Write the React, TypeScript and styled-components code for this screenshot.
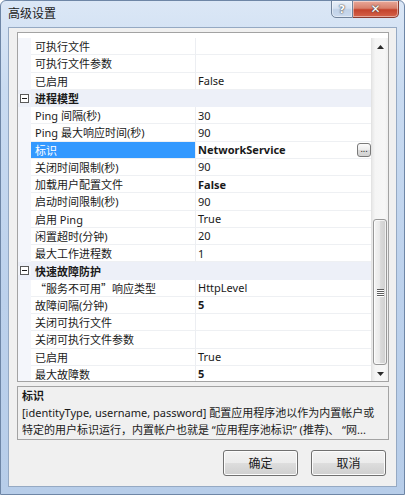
import React from "react";
import styled, { createGlobalStyle } from "styled-components";

const FONT = `"Noto Sans", "Noto Sans CJK SC", sans-serif`;

const GlobalStyle = createGlobalStyle`
  html, body { margin: 0; padding: 0; }
  body { width: 405px; height: 495px; overflow: hidden; background: #ffffff; }
  * { box-sizing: border-box; }
`;

const Window = styled.div`
  width: 405px;
  height: 495px;
  display: flex;
  flex-direction: column;
  border: 1px solid #6e86a6;
  border-radius: 6px 6px 0 0;
  background: linear-gradient(180deg, #dbe7f6 0%, #c9dbf1 18%, #bcd1ec 60%, #b7cde9 100%);
  font-family: ${FONT};
  color: #1a1a1a;
  overflow: hidden;
`;

const TitleBar = styled.div`
  height: 26px;
  flex: none;
  display: flex;
  align-items: flex-start;
  justify-content: space-between;
  padding-left: 7px;
`;

const Title = styled.span`
  font-size: 12px;
  line-height: 26px;
  color: #1c1c1c;
`;

const CaptionGroup = styled.div`
  display: flex;
  margin-right: 5px;
  margin-top: -1px;
`;

const CaptionButton = styled.div<{ $close?: boolean }>`
  width: ${(p) => (p.$close ? 46 : 22)}px;
  height: 18px;
  display: flex;
  align-items: center;
  justify-content: center;
  border: 1px solid ${(p) => (p.$close ? "#8a3b30" : "#71839b")};
  border-left-width: ${(p) => (p.$close ? 0 : 1)}px;
  border-radius: ${(p) => (p.$close ? "0 0 5px 0" : "0 0 0 5px")};
  background: ${(p) =>
    p.$close
      ? "linear-gradient(180deg, #e9a899 0%, #d8806c 45%, #c4432c 55%, #d5634a 100%)"
      : "linear-gradient(180deg, #e9f0f9 0%, #d7e3f2 45%, #c1d2e8 55%, #cbdaee 100%)"};
  box-shadow: inset 0 0 0 1px rgba(255, 255, 255, 0.45);
  color: #ffffff;
  font-family: "DejaVu Sans", sans-serif;
  font-weight: bold;
  font-size: ${(p) => (p.$close ? 12 : 11)}px;
  text-shadow: 0 0 2px #4b4b4b, 0 0 1px #333;
`;

const Client = styled.div`
  flex: 1;
  min-height: 0;
  margin: 0 7px 7px 7px;
  background: #f0f0f0;
  border: 1px solid #95a9c3;
  display: flex;
  flex-direction: column;
  padding: 4px 7px 10px 8px;
`;

const Grid = styled.div`
  flex: 1;
  min-height: 0;
  display: flex;
  border: 1px solid #a3a3a3;
  background: #ffffff;
  padding-top: 5px;
`;

const List = styled.div`
  flex: 1;
  min-width: 0;
  overflow: hidden;
  display: flex;
  flex-direction: column;
`;

const Row = styled.div`
  height: 17.26px;
  flex: none;
  display: flex;
  font-size: 11px;
`;

const Gutter = styled.div`
  width: 13px;
  flex: none;
  background: #f4f6fb;
  display: flex;
  align-items: center;
  justify-content: center;
`;

const NameCell = styled.div<{ $selected?: boolean }>`
  width: 165px;
  flex: none;
  display: flex;
  align-items: center;
  padding-left: 4px;
  white-space: nowrap;
  overflow: hidden;
  border-right: 1px solid #eceef2;
  border-bottom: 1px solid #eef0f3;
  background: ${(p) => (p.$selected ? "#3399ff" : "#ffffff")};
  color: ${(p) => (p.$selected ? "#ffffff" : "#1a1a1a")};
`;

const CjkQuote = styled.span`
  font-family: "Noto Sans CJK SC", sans-serif;
`;

const ValueCell = styled.div<{ $bold?: boolean }>`
  flex: 1;
  min-width: 0;
  display: flex;
  align-items: center;
  justify-content: space-between;
  padding-left: 2px;
  white-space: nowrap;
  border-bottom: 1px solid #eef0f3;
  font-weight: ${(p) => (p.$bold ? 700 : 400)};
`;

const CategoryRow = styled.div`
  height: 17.26px;
  flex: none;
  display: flex;
  align-items: center;
  background: #edf0f8;
  font-size: 11px;
  font-weight: 700;
`;

const CategoryLabel = styled.span`
  padding-left: 4px;
`;

const ExpandBox = styled.div`
  width: 9px;
  height: 9px;
  border: 1px solid #5a5a5a;
  background: #ffffff;
  display: flex;
  align-items: center;
  justify-content: center;
  &::after {
    content: "";
    width: 5px;
    height: 1px;
    background: #1a1a1a;
  }
`;

const EllipsisButton = styled.div`
  width: 14px;
  height: 14px;
  flex: none;
  border: 1px solid #7a7a7a;
  border-radius: 3px;
  background: linear-gradient(180deg, #fbfbfb 0%, #ececec 50%, #dcdcdc 51%, #d2d2d2 100%);
  font-size: 9px;
  font-weight: 400;
  line-height: 9px;
  display: flex;
  align-items: flex-end;
  justify-content: center;
  padding-bottom: 3px;
  color: #222;
`;

const Scrollbar = styled.div`
  width: 17px;
  flex: none;
  display: flex;
  flex-direction: column;
  background: linear-gradient(90deg, #e8e8e8 0%, #f5f5f5 20%, #f7f7f7 80%, #efefef 100%);
  border-left: 1px solid #e3e3e3;
`;

const ArrowButton = styled.div`
  height: 17px;
  flex: none;
  display: flex;
  align-items: center;
  justify-content: center;
`;

const ThumbSpacer = styled.div`
  flex: none;
`;

const Thumb = styled.div`
  flex: none;
  margin: 0 1px 0 1px;
  border: 1px solid #989898;
  border-radius: 3px;
  background: linear-gradient(90deg, #f4f4f4 0%, #eaeaea 45%, #dadada 55%, #d0d0d0 100%);
  box-shadow: inset 0 0 0 1px rgba(255, 255, 255, 0.7);
  display: flex;
  flex-direction: column;
  align-items: center;
  justify-content: center;
  gap: 1px;
`;

const Grip = styled.div`
  width: 7px;
  height: 1px;
  background: #5d5d5d;
  box-shadow: 0 1px 0 #ffffff;
`;

const Description = styled.div`
  height: 54px;
  flex: none;
  margin-top: 4px;
  border: 1px solid #a3a3a3;
  background: #f0f0f0;
  padding: 0 4px;
  font-size: 11px;
  line-height: 17px;
  overflow: hidden;
`;

const DescTitle = styled.div`
  font-weight: 700;
`;

const DescLine = styled.div`
  white-space: nowrap;
`;

const ButtonRow = styled.div`
  flex: none;
  margin-top: 10px;
  display: flex;
  justify-content: flex-end;
  gap: 13px;
  padding-right: 3px;
`;

const DialogButton = styled.div`
  width: 75px;
  height: 26px;
  border: 1px solid #707070;
  border-radius: 3px;
  background: linear-gradient(180deg, #f2f2f2 0%, #ebebeb 50%, #dddddd 51%, #cfcfcf 100%);
  box-shadow: inset 0 0 0 1px #fcfcfc;
  display: flex;
  align-items: center;
  justify-content: center;
  font-size: 12px;
  color: #1a1a1a;
`;

type Prop = {
  name: React.ReactNode;
  value?: string;
  bold?: boolean;
  selected?: boolean;
  ellipsis?: boolean;
};
type Item = { category: string } | Prop;

const items: Item[] = [
  { name: "可执行文件" },
  { name: "可执行文件参数" },
  { name: "已启用", value: "False" },
  { category: "进程模型" },
  { name: "Ping 间隔(秒)", value: "30" },
  { name: "Ping 最大响应时间(秒)", value: "90" },
  { name: "标识", value: "NetworkService", bold: true, selected: true, ellipsis: true },
  { name: "关闭时间限制(秒)", value: "90" },
  { name: "加载用户配置文件", value: "False", bold: true },
  { name: "启动时间限制(秒)", value: "90" },
  { name: "启用 Ping", value: "True" },
  { name: "闲置超时(分钟)", value: "20" },
  { name: "最大工作进程数", value: "1" },
  { category: "快速故障防护" },
  {
    name: (
      <>
        <CjkQuote>“</CjkQuote>服务不可用<CjkQuote>”</CjkQuote>响应类型
      </>
    ),
    value: "HttpLevel",
  },
  { name: "故障间隔(分钟)", value: "5", bold: true },
  { name: "关闭可执行文件" },
  { name: "关闭可执行文件参数" },
  { name: "已启用", value: "True" },
  { name: "最大故障数", value: "5", bold: true },
];

const Arrow = ({ up }: { up?: boolean }) => (
  <svg width="7" height="4" viewBox="0 0 7 4">
    <path d={up ? "M0 4 L3.5 0 L7 4 Z" : "M0 0 L3.5 4 L7 0 Z"} fill="#2b2b2b" />
  </svg>
);

export default function App() {
  return (
    <>
      <GlobalStyle />
      <Window>
        <TitleBar>
          <Title>高级设置</Title>
          <CaptionGroup>
            <CaptionButton>?</CaptionButton>
            <CaptionButton $close>✕</CaptionButton>
          </CaptionGroup>
        </TitleBar>
        <Client>
          <Grid>
            <List>
              {items.map((it, i) =>
                "category" in it ? (
                  <CategoryRow key={i}>
                    <Gutter>
                      <ExpandBox />
                    </Gutter>
                    <CategoryLabel>{it.category}</CategoryLabel>
                  </CategoryRow>
                ) : (
                  <Row key={i}>
                    <Gutter />
                    <NameCell $selected={it.selected}>{it.name}</NameCell>
                    <ValueCell $bold={it.bold}>
                      <span>{it.value ?? ""}</span>
                      {it.ellipsis && <EllipsisButton>...</EllipsisButton>}
                    </ValueCell>
                  </Row>
                )
              )}
            </List>
            <Scrollbar>
              <ArrowButton>
                <Arrow up />
              </ArrowButton>
              <ThumbSpacer style={{ height: 164 }} />
              <Thumb style={{ height: 146 }}>
                <Grip />
                <Grip />
                <Grip />
                <Grip />
              </Thumb>
              <ThumbSpacer style={{ flex: 1 }} />
              <ArrowButton>
                <Arrow />
              </ArrowButton>
            </Scrollbar>
          </Grid>
          <Description>
            <DescTitle>标识</DescTitle>
            <DescLine>[identityType, username, password] 配置应用程序池以作为内置帐户或</DescLine>
            <DescLine>特定的用户标识运行，内置帐户也就是 “应用程序池标识” (推荐)、 “网...</DescLine>
          </Description>
          <ButtonRow>
            <DialogButton>确定</DialogButton>
            <DialogButton>取消</DialogButton>
          </ButtonRow>
        </Client>
      </Window>
    </>
  );
}
